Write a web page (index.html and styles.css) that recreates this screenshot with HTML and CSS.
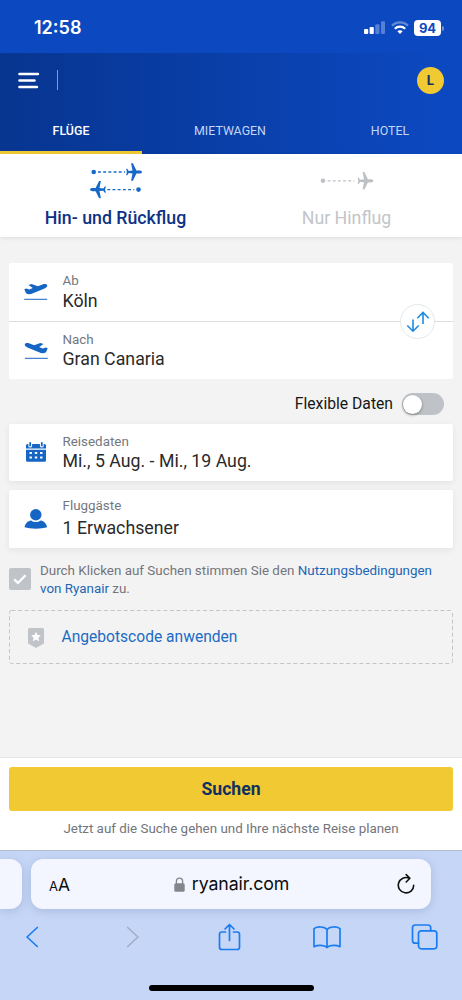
FILE: index.html
```html
<!DOCTYPE html>
<html lang="de">
<head>
<meta charset="utf-8">
<title>Ryanair</title>
<link rel="stylesheet" href="styles.css">
</head>
<body>
<svg class="defs" width="0" height="0">
  <symbol id="plane" viewBox="0 0 16 18"><path d="M16 9c0-1-1.300-1.600-2.600-1.600H10.400L6.900.3H5.100L6.500 7.500 2.700 7.900 1.200 5.800H.1L.9 9 .1 12.200h1.100L2.700 10.100l3.800.4-1.400 7.200h1.800l3.500-7.100h3C14.700 10.600 16 10 16 9z"/></symbol>
  <symbol id="takeoff" viewBox="0 0 24 18"><path d="M23.2 2.200C22.200.8 20 1 18.500 1.500L13.800 3.200 7.600.9 4.500 1.900 8.800 5 5.500 6.600 2 5.400.3 6.300 2 10.200c2 1.400 4.500 1.200 7 .1L20 5.800c2-1 3.600-2.200 3.200-3.600z"/><path d="M.2 15.800h23v1H.2z"/></symbol>
</svg>
<div class="phone">
  <div class="status">
    <span class="time">12:58</span>
    <div class="indicators">
      <svg width="21" height="14" viewBox="0 0 21 14" fill="#fff"><rect y="8" width="4.2" height="5" rx="1"/><rect x="5.6" y="6" width="4.2" height="7" rx="1"/><rect x="11.3" y="3.2" width="4.2" height="9.8" rx="1" opacity=".3"/><rect x="17" y=".3" width="4" height="12.7" rx="1" opacity=".3"/></svg>
      <svg width="18" height="14" viewBox="0 0 18 14" fill="none" stroke="#fff" stroke-width="2.2"><path d="M1 4.600c4.500-4.200 11.500-4.200 16 0" opacity=".35"/><path d="M3.800 7.700c3-2.900 7.400-2.900 10.400 0"/><path d="M9 13 6.400 10.300c1.500-1.300 3.700-1.300 5.200 0z" fill="#fff" stroke="none"/></svg>
      <div class="battery"><span class="level">94</span><span class="cap"></span></div>
    </div>
  </div>
  <header class="header">
    <div class="topbar">
      <svg width="24" height="20" viewBox="0 0 24 20" fill="none" stroke="#fff" stroke-width="2.600" stroke-linecap="round"><path d="M2.500 4h18.400M2.500 10.500h15M2.500 17h17.400"/></svg>
      <span class="bar"></span>
      <span class="avatar">L</span>
    </div>
    <nav class="tabs">
      <span class="tab active">FLÜGE</span>
      <span class="tab mid">MIETWAGEN</span>
      <span class="tab">HOTEL</span>
    </nav>
  </header>
  <div class="trips">
    <div class="trip chosen">
      <svg width="54" height="38" viewBox="0 0 54 38"><circle cx="4.700" cy="9" r="2.300"/><path class="dash" d="M9 9h27"/><use href="#plane" x="37" y="0" width="16" height="18"/><use href="#plane" width="16" height="18" transform="translate(17 17.600) scale(-1 1)"/><path class="dash" d="M18.300 26.600h27"/><circle cx="49.500" cy="26.600" r="2.300"/></svg>
      <span>Hin- und Rückflug</span>
    </div>
    <div class="trip other">
      <svg width="54" height="38" viewBox="0 0 54 38"><circle cx="3" cy="17.800" r="2.300"/><path class="dash" d="M7.500 17.800h27"/><use href="#plane" x="37.500" y="8.800" width="16" height="18"/></svg>
      <span>Nur Hinflug</span>
    </div>
  </div>
  <main class="form">
    <section class="card route">
      <div class="field from">
        <svg class="ico blue" width="24" height="18"><use href="#takeoff"/></svg>
        <div class="texts"><span class="label">Ab</span><span class="value">Köln</span></div>
      </div>
      <div class="field to">
        <svg class="ico blue flip" width="24" height="18"><use href="#takeoff"/></svg>
        <div class="texts"><span class="label">Nach</span><span class="value">Gran Canaria</span></div>
      </div>
      <span class="swap"><svg width="24" height="22" viewBox="0 0 24 22" fill="none" stroke="#1f8ae0" stroke-width="1.600"><path d="M7 8.500v12M1.300 14.500 7 20.200l5.700-5.700M17 13V1.500M11.300 7.200 17 1.500l5.700 5.700"/></svg></span>
    </section>
    <div class="flex-dates"><span>Flexible Daten</span><span class="switch"><i class="knob"></i></span></div>
    <section class="card raised field dates">
      <svg class="ico blue" width="24" height="20" viewBox="0 0 24 20"><path d="M2 7.700h20v10.500a1.500 1.500 0 0 1-1.500 1.500h-17A1.500 1.500 0 0 1 2 18.200zM2 6.500V3.500A1.500 1.500 0 0 1 3.500 2H4.300v1.700a1.900 1.900 0 0 0 3.800 0V2h7.800v1.700a1.900 1.900 0 0 0 3.800 0V2h.8A1.500 1.500 0 0 1 22 3.500v3zM5.300.2h1.800v4H5.300zM16.900.2h1.800v4h-1.800z"/><path class="cells" d="M5.500 10h2.400v2H5.500zm5.300 0h2.400v2h-2.400zm5.300 0h2.400v2h-2.400zM5.500 14.500h2.400v2H5.500zm5.300 0h2.400v2h-2.400zm5.300 0h2.400v2h-2.400z"/></svg>
      <div class="texts"><span class="label">Reisedaten</span><span class="value">Mi., 5 Aug. - Mi., 19 Aug.</span></div>
    </section>
    <section class="card raised field guests">
      <svg class="ico blue" width="24" height="20" viewBox="0 0 24 20"><circle cx="11.800" cy="5.700" r="5.700"/><path d="M.6 18.300c.5-3.700 3-6.400 6.600-6.800 2.600 2 6.600 2 9.200 0 3.600.4 6.200 3.100 6.700 6.800-5.600 1.900-16.900 1.900-22.500 0z"/></svg>
      <div class="texts"><span class="label">Fluggäste</span><span class="value">1 Erwachsener</span></div>
    </section>
    <div class="terms">
      <span class="check"><svg width="14" height="11" viewBox="0 0 14 11" fill="none" stroke="#fff" stroke-width="2.300"><path d="M1.200 5.400 5 9l7.500-7.800"/></svg></span>
      <p>Durch Klicken auf Suchen stimmen Sie den <a>Nutzungsbedingungen<br>von Ryanair</a> zu.</p>
    </div>
    <div class="promo">
      <svg class="outline" width="444" height="54" fill="none" stroke="#c4c5c8" stroke-dasharray="4 2.600"><rect x=".5" y=".5" width="443" height="53" rx="2"/></svg>
      <svg class="shield" width="16" height="20" viewBox="0 0 16 20"><path d="M1.500 0h13Q16 0 16 1.500V15.500L8 20 0 15.500V1.500Q0 0 1.500 0z" fill="#c0c4c9"/><path d="m8 3.700 1.500 3.200 3.400.4-2.500 2.400.7 3.500L8 11.500l-3.100 1.700.7-3.500-2.500-2.400 3.400-.4z" fill="#fff"/></svg>
      <span>Angebotscode anwenden</span>
    </div>
  </main>
  <footer class="cta">
    <button class="search">Suchen</button>
    <span class="hint">Jetzt auf die Suche gehen und Ihre nächste Reise planen</span>
  </footer>
  <div class="browser">
    <div class="addressrow">
      <span class="prev"></span>
      <div class="address">
        <span class="aa"><small>A</small>A</span>
        <span class="url"><svg width="11" height="15" viewBox="0 0 11 15"><path d="M2.400 7V4.300a3.100 3.100 0 0 1 6.200 0V7" fill="none" stroke="#85868c" stroke-width="1.300"/><rect x=".3" y="6.300" width="10.400" height="8.500" rx="1.500" fill="#85868c"/></svg>ryanair.com</span>
        <svg class="reload" width="18" height="22" viewBox="0 0 18 22" fill="none" stroke="#111" stroke-width="1.600" stroke-linecap="round" stroke-linejoin="round"><path d="M16.700 12.200A7.700 7.700 0 1 1 12.200 5.200M9.200 1.600l3.700 3.700L9.200 9"/></svg>
      </div>
    </div>
    <div class="tools">
      <span><svg width="14" height="22" viewBox="0 0 14 22"><path d="m12.300 1.500-10.300 9.500 10.300 9.500"/></svg></span>
      <span><svg class="off" width="14" height="22" viewBox="0 0 14 22"><path d="m1.700 1.500 10.300 9.500-10.300 9.500"/></svg></span>
      <span><svg width="23" height="28" viewBox="0 0 23 28"><path d="M7.500 9H3.800Q1.500 9 1.500 11.300v12.900q0 2.300 2.300 2.300h15.400q2.300 0 2.300-2.300V11.300Q21.500 9 19.200 9h-3.700M11.500 17.500V1.500M7 6l4.500-4.500L16 6"/></svg></span>
      <span><svg width="28" height="23" viewBox="0 0 28 23"><path d="M14 3.600C11.500.4 4.500.2 1 2.600v18.100c3.500-1.900 10.500-1.900 13 .8 2.500-2.700 9.500-2.700 13-.8V2.600C23.500.2 16.500.4 14 3.600zv17.900"/></svg></span>
      <span><svg width="27" height="26" viewBox="0 0 27 26"><rect x="7.500" y="6.800" width="18.300" height="18" rx="2.700"/><path d="M7.500 19.200H4.200q-2.700 0-2.700-2.700V3.700Q1.500 1 4.200 1H17q2.700 0 2.700 2.700v3.100"/></svg></span>
    </div>
    <span class="home"></span>
  </div>
</div>
</body>
</html>
```
FILE: styles.css
```css
* { box-sizing: border-box; }
body { margin: 0; font-family: Roboto, "Liberation Sans", sans-serif; background: #f3f3f3; }
svg { display: block; flex: none; }
.defs { position: absolute; }
.phone { width: 462px; height: 1000px; display: flex; flex-direction: column; overflow: hidden; }

.status { height: 53px; background: #0c49c0; display: flex; justify-content: space-between; padding: 17px 18px 0 34px; color: #fff; flex: none; }
.time { font: 600 18px/22px Inter, sans-serif; letter-spacing: 0; }
.indicators { display: flex; gap: 6px; padding-top: 4px; }
.indicators svg { margin-right: -0.5px; margin-left: 0.5px; }
.battery { display: flex; align-items: center; gap: 1px; height: 16px; margin-top: -1px; }
.level { width: 27px; height: 16px; border-radius: 4px; background: #fff; color: #0c49c0; font: 700 13px/16px Inter, sans-serif; text-align: center; }
.cap { width: 2px; height: 5px; border-radius: 0 2px 2px 0; background: #6d93db; }

.header { height: 101px; background: linear-gradient(90deg, #073590, #0c48c0 95%); flex: none; }
.topbar { height: 54px; display: flex; align-items: center; padding: 0 18px 0 17px; }
.bar { width: 1px; height: 20px; background: #7f9bd3; margin-left: 16px; }
.avatar { width: 27px; height: 27px; margin-left: auto; border-radius: 50%; background: #f1c933; color: #12305f; font: 700 13px/27px Inter, sans-serif; text-align: center; }
.tabs { display: flex; height: 47px; }
.tab { flex: 0 0 144px; text-align: center; font-size: 12.4px; line-height: 47px; color: #c5d5f5; }
.tab.mid { flex-basis: 176px; }
.tab.active { flex-basis: 142px; border-bottom: 3px solid #f1c933; color: #fff; font-weight: 500; }

.trips { height: 83px; background: #fff; display: flex; flex: none; position: relative; box-shadow: 0 1px 4px rgba(0,0,0,.09); }
.trip { width: 231px; display: flex; flex-direction: column; align-items: center; padding-top: 9px; font-size: 17.75px; line-height: 22px; gap: 6px; }
.trip .dash { fill: none; stroke: currentColor; stroke-width: 1.3; stroke-dasharray: 2.9 2.3; }
.trip svg { fill: currentColor; color: #1769c7; }
.chosen { color: #0d3285; font-weight: 500; }
.other { color: #c2c5c9; }
.other svg { color: #bdc1c6; }

.form { height: 520px; padding: 26px 9px 0; background: #f3f3f3; flex: none; }
.card { background: #fff; border-radius: 2px; }
.raised { box-shadow: 0 2px 6px rgba(0,30,50,.07); }
.route { position: relative; height: 116px; }
.field { display: flex; padding-left: 15px; }
.from { height: 59px; border-bottom: 1px solid #dcdddf; }
.to { height: 57px; }
.texts { display: flex; flex-direction: column; margin-left: 14.5px; padding-top: 9px; }
.from .value { margin-top: 1px; }
.label { font-size: 13.4px; line-height: 17px; color: #747780; }
.value { font-size: 17.75px; line-height: 22px; color: #2a2a2a; }
.ico { margin-top: 20px; }
.blue { fill: #1565c4; }
.flip { transform: scaleX(-1); }
.cells { fill: #fff; }
.swap { position: absolute; right: 18px; top: 41px; width: 35px; height: 35px; border: 1px solid #e5e8ea; border-radius: 50%; background: #fff; display: grid; place-items: center; }
.flex-dates { height: 45px; display: flex; align-items: center; justify-content: flex-end; gap: 9px; padding: 4px 9px 0 0; font-size: 15.7px; color: #161616; }
.switch { width: 42px; height: 22px; border-radius: 11px; background: #bfc3c8; padding: 2px 1px; }
.knob { display: block; width: 19px; height: 19px; border-radius: 50%; background: #fff; box-shadow: 0 1px 3px rgba(0,0,0,.4); }
.dates { height: 57px; margin-bottom: 9px; }
.dates .ico { margin-top: 18px; }
.guests { height: 58px; }
.guests .texts { padding-top: 7px; }
.guests .value { margin-top: 3px; }
.guests .ico { margin-top: 19px; }
.terms { display: flex; height: 62px; padding-top: 14px; }
.check { width: 22px; height: 22px; margin-top: 6px; border-radius: 2px; background: #c0c4c9; display: grid; place-items: center; }
.terms p { margin: 0 0 0 9px; font-size: 13.4px; line-height: 18px; color: #73757b; white-space: nowrap; }
.terms a { color: #1c66b5; }
.promo { position: relative; height: 54px; display: flex; align-items: center; padding-left: 19px; gap: 17.5px; font-size: 15.6px; color: #1c6bc4; }
.outline { position: absolute; inset: 0; }
.shield { margin-top: 2px; }

.cta { height: 93px; background: #fff; border-top: 1px solid #e5e5e5; padding: 9px 9px 0; display: flex; flex-direction: column; align-items: center; flex: none; }
.search { width: 100%; height: 44px; border: 0; border-radius: 3px; background: #f1c933; color: #12305f; font: 700 17.6px/44px Roboto, sans-serif; padding: 0; }
.hint { font-size: 13.4px; line-height: 18px; margin-top: 9px; color: #73757b; }

.browser { height: 150px; background: #c6d6f6; border-top: 1px solid #b2bccc; flex: none; display: flex; flex-direction: column; align-items: center; }
.addressrow { width: 100%; display: flex; padding-top: 8px; gap: 9px; }
.prev { width: 22px; height: 50px; border-radius: 0 12px 12px 0; background: #f3f6fe; box-shadow: 0 2px 10px rgba(50,80,140,.2); }
.address { width: 400px; height: 50px; border-radius: 12px; background: #f3f6fe; box-shadow: 0 2px 10px rgba(50,80,140,.2); display: flex; align-items: center; justify-content: space-between; padding: 0 16px 0 18px; color: #0c0c0e; }
.aa { font: 17.5px/22px Inter, sans-serif; padding-top: 3px; }
.aa small { font-size: 13px; }
.url { display: flex; align-items: center; gap: 7px; margin-right: 4px; font: 17.75px/22px Inter, sans-serif; letter-spacing: -0.1px; }
.tools { width: 100%; height: 54px; display: grid; grid-template-columns: 84px repeat(3, 97px) 87px; align-items: center; padding-top: 2px; }
.tools span { display: grid; place-items: center; }
.tools span:first-child { padding-right: 20px; }
.tools span:nth-child(5) { padding-left: 11px; }
.tools svg { fill: none; stroke: #1b7cf2; stroke-width: 1.7; stroke-linecap: round; stroke-linejoin: round; }
.tools .off { stroke: #a3afc9; }
.home { width: 165px; height: 6px; border-radius: 3px; background: #000; margin-top: 22px; }
```
